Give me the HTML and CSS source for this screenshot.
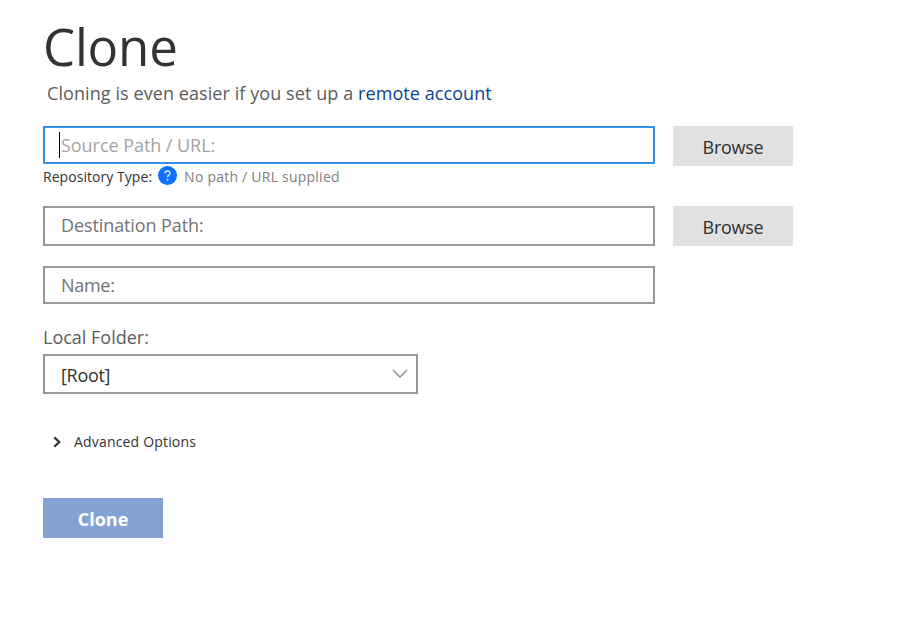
FILE: index.html
```html
<!DOCTYPE html>
<html lang="en">
<head>
<meta charset="utf-8">
<title>Clone</title>
<link rel="stylesheet" href="styles.css">
</head>
<body>
<main class="page">
  <h1 class="title">Clone</h1>
  <p class="intro">Cloning is even easier if you set up a <a href="#">remote account</a></p>
  <div class="row source-row">
    <div class="field focused"><i class="caret"></i><span>Source Path / URL:</span></div>
    <button class="browse">Browse</button>
  </div>
  <div class="status">
    <span class="type">Repository Type:</span>
    <svg class="help" viewBox="0 0 20 20"><circle cx="10" cy="10" r="10" fill="#0f70ff"/><path d="M7.3 7.7C7.3 4.4 12.7 4.5 12.7 7.5C12.7 9.6 10 9.5 10 11.8" fill="none" stroke="#d5e8ff" stroke-width="1.6"/><circle cx="10" cy="14.4" r="1.1" fill="#d5e8ff"/></svg>
    <span class="message">No path / URL supplied</span>
  </div>
  <div class="row destination-row">
    <div class="field destination">Destination Path:</div>
    <button class="browse">Browse</button>
  </div>
  <div class="field name">Name:</div>
  <div class="folder-label">Local Folder:</div>
  <div class="select"><span class="value">[Root]</span><svg class="chevron" viewBox="0 0 16 10"><path d="M1 1L8 8L15 1"/></svg></div>
  <div class="advanced"><svg class="arrow" viewBox="0 0 8 12"><path d="M1.3 1.2L6.2 6L1.3 10.8"/></svg><span>Advanced Options</span></div>
  <button class="clone">Clone</button>
</main>
</body>
</html>
```
FILE: styles.css
```css
* { box-sizing: border-box; }
body { margin: 0; background: #fff; font-family: "Open Sans", sans-serif; color: #333; overflow: hidden; }
.page { padding: 16px 0 0 43px; width: 897px; height: 622px; white-space: nowrap; }
.title { margin: 0; font-size: 51px; line-height: 60px; height: 60px; font-weight: 400; letter-spacing: -.2px; }
.intro { margin: 5px 0 0 4px; height: 27px; line-height: 25px; font-size: 18px; color: #5c5c5c; letter-spacing: .08px; }
a { color: #0b4496; text-decoration: none; }
.row { display: flex; gap: 18px; }
.source-row { margin-top: 18px; height: 40px; }
.field { width: 612px; height: 38px; border: 2px solid #999; padding-left: 16px; display: flex; align-items: center; color: #737373; font-size: 18px; letter-spacing: -.3px; }
.focused { border-color: #3590e5; padding-left: 14px; color: #a3a3a3; letter-spacing: -.05px; }
.caret { width: 1px; height: 26px; background: #000; margin-right: 1px; }
.browse { border: 0; padding: 2px 0 0; width: 120px; height: 40px; background: #e1e1e1; color: #303030; font: 18px "Open Sans", sans-serif; letter-spacing: -.25px; }
.status { display: flex; align-items: center; height: 20px; margin-bottom: 20px; font-size: 14px; }
.type { letter-spacing: .05px; }
.help { width: 19px; height: 19px; margin: -1px 7px 0 6px; }
.message { color: #808080; letter-spacing: .23px; }
.destination { height: 40px; padding-bottom: 2px; letter-spacing: -.1px; }
.name { margin-top: 20px; }
.folder-label { margin-top: 21px; height: 29px; line-height: 25px; font-size: 18px; color: #5c5c5c; }
.select { width: 375px; height: 40px; border: 2px solid #999; padding: 0 8px 0 16px; display: flex; align-items: center; justify-content: space-between; font-size: 18px; }
.value { padding-top: 2px; letter-spacing: -.3px; }
.chevron { width: 16px; height: 10px; fill: none; stroke: #888; stroke-width: 1.3; }
.advanced { margin-top: 35px; height: 24px; display: flex; align-items: center; font-size: 14px; letter-spacing: .18px; padding-left: 10px; }
.arrow { width: 8px; height: 12px; margin: 1px 13px 0 0; fill: none; stroke: #333; stroke-width: 2.3; }
.clone { margin-top: 45px; border: 0; padding: 2px 0 0; width: 120px; height: 40px; background: #84a3d4; color: #fff; font: 700 18px "Open Sans", sans-serif; }
```
